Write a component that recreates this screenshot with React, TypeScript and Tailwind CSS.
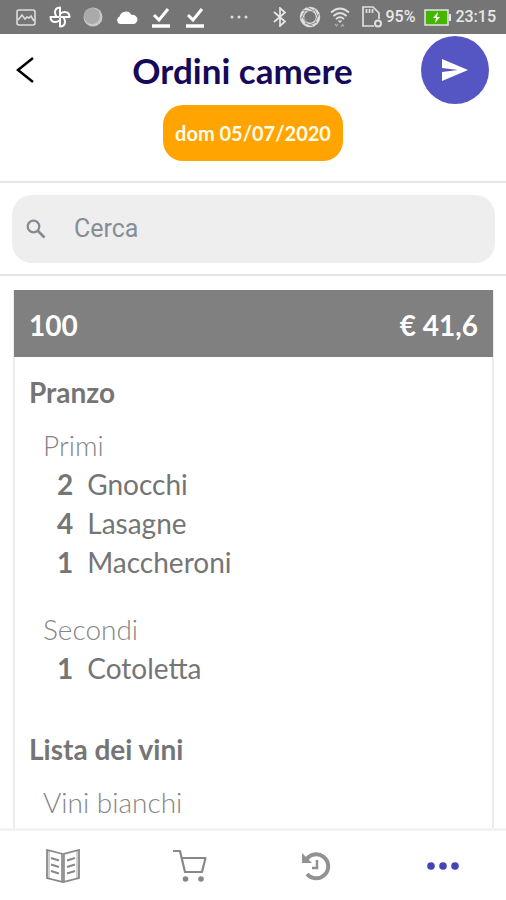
import React from "react";

type Item = { qty: number; name: string };
type Category = { name: string; items: Item[] };
type Menu = { name: string; categories: Category[] };

const menus: Menu[] = [
  {
    name: "Pranzo",
    categories: [
      {
        name: "Primi",
        items: [
          { qty: 2, name: "Gnocchi" },
          { qty: 4, name: "Lasagne" },
          { qty: 1, name: "Maccheroni" },
        ],
      },
      { name: "Secondi", items: [{ qty: 1, name: "Cotoletta" }] },
    ],
  },
  { name: "Lista dei vini", categories: [{ name: "Vini bianchi", items: [] }] },
];

function DoneIcon() {
  return (
    <svg width="20" height="22" viewBox="0 0 20 22" fill="none" stroke="#fff">
      <path d="M3 9l5 5L17 3" strokeWidth="3" />
      <path d="M1 20h18" strokeWidth="3.500" />
    </svg>
  );
}

function StatusBar() {
  return (
    <div className="flex h-[34px] shrink-0 items-center justify-between bg-[#757575] pr-[10px] pl-4 font-['Roboto',sans-serif] text-base font-medium text-[#e8e8e8]">
      <div className="flex items-center">
        <svg width="20" height="17" viewBox="0 0 20 17" fill="none" stroke="#ddd" strokeWidth="1.6">
          <rect x="1" y="1" width="18" height="15" rx="2" />
          <path d="M2 11l4-5 3 4 2-2 2 1 2-2 3 5" />
        </svg>
        <svg className="ml-[13px]" width="22" height="22" viewBox="0 0 22 22" fill="none" stroke="#fff" strokeWidth="2" strokeLinejoin="round">
          <path d="M11 10.500V1.500C7.500 1.500 6 3.500 6 6.500Q6 8.500 7.500 10.500" />
          <path d="M11 10.500V1.500C7.500 1.500 6 3.500 6 6.500Q6 8.500 7.500 10.500" transform="rotate(90 11 11)" />
          <path d="M11 10.500V1.500C7.500 1.500 6 3.500 6 6.500Q6 8.500 7.500 10.500" transform="rotate(180 11 11)" />
          <path d="M11 10.500V1.500C7.500 1.500 6 3.500 6 6.500Q6 8.500 7.500 10.500" transform="rotate(270 11 11)" />
        </svg>
        <svg className="ml-3" width="20" height="20" viewBox="0 0 20 20">
          <circle cx="10" cy="10" r="9.500" fill="#c9c9c9" />
          <circle cx="9" cy="9" r="8" fill="#aaa" />
        </svg>
        <svg className="ml-[13px]" width="22" height="13" viewBox="0 0 22 13" fill="#fff">
          <path d="M4 13a4 4 0 0 1-.5-7.500A6.500 6.500 0 0 1 15.500 4 4.500 4.500 0 0 1 18 13z" />
        </svg>
        <span className="ml-[13px]"><DoneIcon /></span>
        <span className="ml-[14px]"><DoneIcon /></span>
        <svg className="ml-[25px]" width="18" height="4" viewBox="0 0 18 4" fill="#e0e0e0">
          <circle cx="2" cy="2" r="1.500" />
          <circle cx="9" cy="2" r="1.500" />
          <circle cx="16" cy="2" r="1.500" />
        </svg>
      </div>
      <div className="flex items-center">
        <svg width="14" height="20" viewBox="0 0 14 20" fill="none" stroke="#e8e8e8" strokeWidth="1.7">
          <path d="M1 5l11 9.500L7 19V1l5 4.500L1 15" />
        </svg>
        <svg className="ml-3" width="22" height="22" viewBox="0 0 22 22" fill="none" stroke="#dedede">
          <circle cx="11" cy="11" r="8" strokeWidth="4.500" />
          <path d="M8 1l7 4M3 4l11 2M15 3l4 8M20 8l-4 8M18 16l-8 3M14 20l-8-3M8 18l-5-8M2 13l4-8" stroke="#858585" strokeWidth="0.900" />
        </svg>
        <svg className="ml-[9px]" width="20" height="21" viewBox="0 0 20 21" fill="none" stroke="#e0e0e0" strokeWidth="1.8">
          <path d="M1 5.500q9-8 18 0M3.500 9q6.500-6 13 0M6 12q4-3.500 8 0" />
          <path d="M7.500 13.500h5L10 16z" fill="#e0e0e0" stroke="none" />
          <path d="M5 17l1.500 2L8 17M11 19.500l1.500-2 1.500 2" stroke="#aaa" strokeWidth="1.300" />
        </svg>
        <svg className="ml-3" width="20" height="22" viewBox="0 0 20 22" fill="none" stroke="#e0e0e0" strokeWidth="1.700">
          <path d="M12 20H1V1h10l6 6v6" />
          <path d="M4.500 3v4M7.500 3v4M10.500 3v4" />
          <circle cx="16" cy="17.500" r="3" strokeWidth="2" />
        </svg>
        <span className="ml-[3px]">95%</span>
        <svg className="ml-[9px]" width="27" height="17" viewBox="0 0 27 17">
          <rect x="1" y="1" width="23" height="15" fill="#45b500" stroke="#e5e5e5" strokeWidth="1.500" />
          <path d="M25 5h2v7h-2z" fill="#e5e5e5" />
          <path d="M14 3l-5 6h3l-1 5 5-6h-3z" fill="#fff" />
        </svg>
        <span className="ml-1">23:15</span>
      </div>
    </div>
  );
}

function Header() {
  return (
    <header className="flex shrink-0 flex-col items-center border-b-2 border-[#e6e6e6] pt-[2px] pb-5">
      <div className="grid w-full grid-cols-[48px_1fr_68px] items-center pr-[17px] pl-4">
        <button type="button" aria-label="Indietro" className="justify-self-start">
          <svg width="18" height="26" viewBox="0 0 18 26" fill="none" stroke="#000" strokeWidth="2.500">
            <path d="M17 1L2 13l15 12" />
          </svg>
        </button>
        <h1 className="text-center text-[35px] leading-10 font-bold text-[#150958]">Ordini camere</h1>
        <button type="button" aria-label="Invia" className="flex size-[68px] items-center justify-center rounded-full bg-[#5555c4]">
          <svg width="26" height="22" viewBox="0 0 26 22" fill="#fff">
            <path d="M0 0l26 11L0 22v-9L16 11 0 9z" />
          </svg>
        </button>
      </div>
      <button type="button" className="mt-px h-14 rounded-[20px] bg-[#ffa400] px-3 text-xl font-bold text-[#fffbea]">
        dom 05/07/2020
      </button>
    </header>
  );
}

function Search() {
  return (
    <div className="shrink-0 border-b-2 border-[#e6e6e6] pt-3 pr-[11px] pb-[11px] pl-3">
      <label className="flex h-[68px] items-center gap-7 rounded-[20px] bg-[#eee] pl-[14px] pr-4">
        <svg width="20" height="20" viewBox="0 0 20 20" fill="none" stroke="#808b93" strokeWidth="2.200">
          <circle cx="7.500" cy="7.500" r="5.800" />
          <path d="M11.500 11.500l7 7" strokeWidth="2.600" />
        </svg>
        <input
          type="text"
          aria-label="Cerca"
          placeholder="Cerca"
          className="min-w-0 flex-1 bg-transparent font-['Roboto',sans-serif] text-[25px] outline-none placeholder:text-[#868e95] placeholder:opacity-100"
        />
      </label>
    </div>
  );
}

function OrderCard() {
  return (
    <section className="mt-[14px] mr-3 ml-[13px] border-x-2 border-[#ececec] text-[28px] leading-[39px] text-[#757575]">
      <div className="-mx-px flex h-[67px] items-center justify-between bg-[#808080] px-[15px] pt-[3px] font-bold text-white">
        <h2>100</h2>
        <span>€ 41,6</span>
      </div>
      <div className="flex flex-col gap-[42px] px-[14px] pt-4 pb-[42px]">
        {menus.map((menu) => (
          <div key={menu.name}>
            <h3 className="mb-[14px] font-bold">{menu.name}</h3>
            <div className="flex flex-col gap-7 pl-[14px]">
              {menu.categories.map((category) => (
                <div key={category.name}>
                  <h4 className="font-light text-[#858585]">{category.name}</h4>
                  <ul className="pl-[14px]">
                    {category.items.map((item) => (
                      <li key={item.name} className="flex gap-[14px]">
                        <span className="font-bold">{item.qty}</span>
                        <span>{item.name}</span>
                      </li>
                    ))}
                  </ul>
                </div>
              ))}
            </div>
          </div>
        ))}
      </div>
    </section>
  );
}

function BottomNav() {
  const button = "flex items-center justify-center";
  return (
    <nav className="grid h-[72px] shrink-0 grid-cols-4 border-t-[3px] border-[#f3f3f3] bg-white text-[#888]">
      <button type="button" aria-label="Menu" className={button}>
        <svg width="36" height="34" viewBox="0 0 36 34" fill="none" stroke="currentColor" strokeWidth="1.800">
          <path d="M18 5L2 1v28l16 4 16-4V1zM18 5v28" />
          <path d="M4 2v27M32 2v27M16.500 5v27M19.500 5v27" strokeWidth="0.800" />
          <path d="M6 9l8 2.500M6 15.500l8 2.500M6 22l8 2.500M30 9l-8 2.500M30 15.500l-8 2.500M30 22l-8 2.500" strokeWidth="2" />
        </svg>
      </button>
      <button type="button" aria-label="Carrello" className={button}>
        <svg width="34" height="33" viewBox="0 0 34 33" fill="none" stroke="currentColor" strokeWidth="2.200">
          <path d="M0 2h7l5 21h17l3.500-14H9" strokeLinejoin="round" />
          <circle cx="12.500" cy="30" r="2.800" fill="currentColor" stroke="none" />
          <circle cx="28" cy="30" r="2.800" fill="currentColor" stroke="none" />
        </svg>
      </button>
      <button type="button" aria-label="Cronologia" className={button}>
        <svg width="30" height="30" viewBox="0 0 30 30" fill="none" stroke="#929292" strokeWidth="4">
          <path d="M5 9A12 12 0 1 1 6 23" />
          <path d="M1 2v10h10z" fill="#929292" stroke="none" />
          <path d="M16 9v8h-5" strokeWidth="2.500" />
        </svg>
      </button>
      <button type="button" aria-label="Altro" className={button}>
        <svg width="32" height="8" viewBox="0 0 32 8" fill="#4444b5">
          <circle cx="4" cy="4" r="3.800" />
          <circle cx="16" cy="4" r="3.800" />
          <circle cx="28" cy="4" r="3.800" />
        </svg>
      </button>
    </nav>
  );
}

export default function App() {
  return (
    <div className="flex h-screen flex-col bg-white font-['Lato',sans-serif]">
      <StatusBar />
      <Header />
      <Search />
      <main className="min-h-0 flex-1 overflow-hidden">
        <OrderCard />
      </main>
      <BottomNav />
    </div>
  );
}
